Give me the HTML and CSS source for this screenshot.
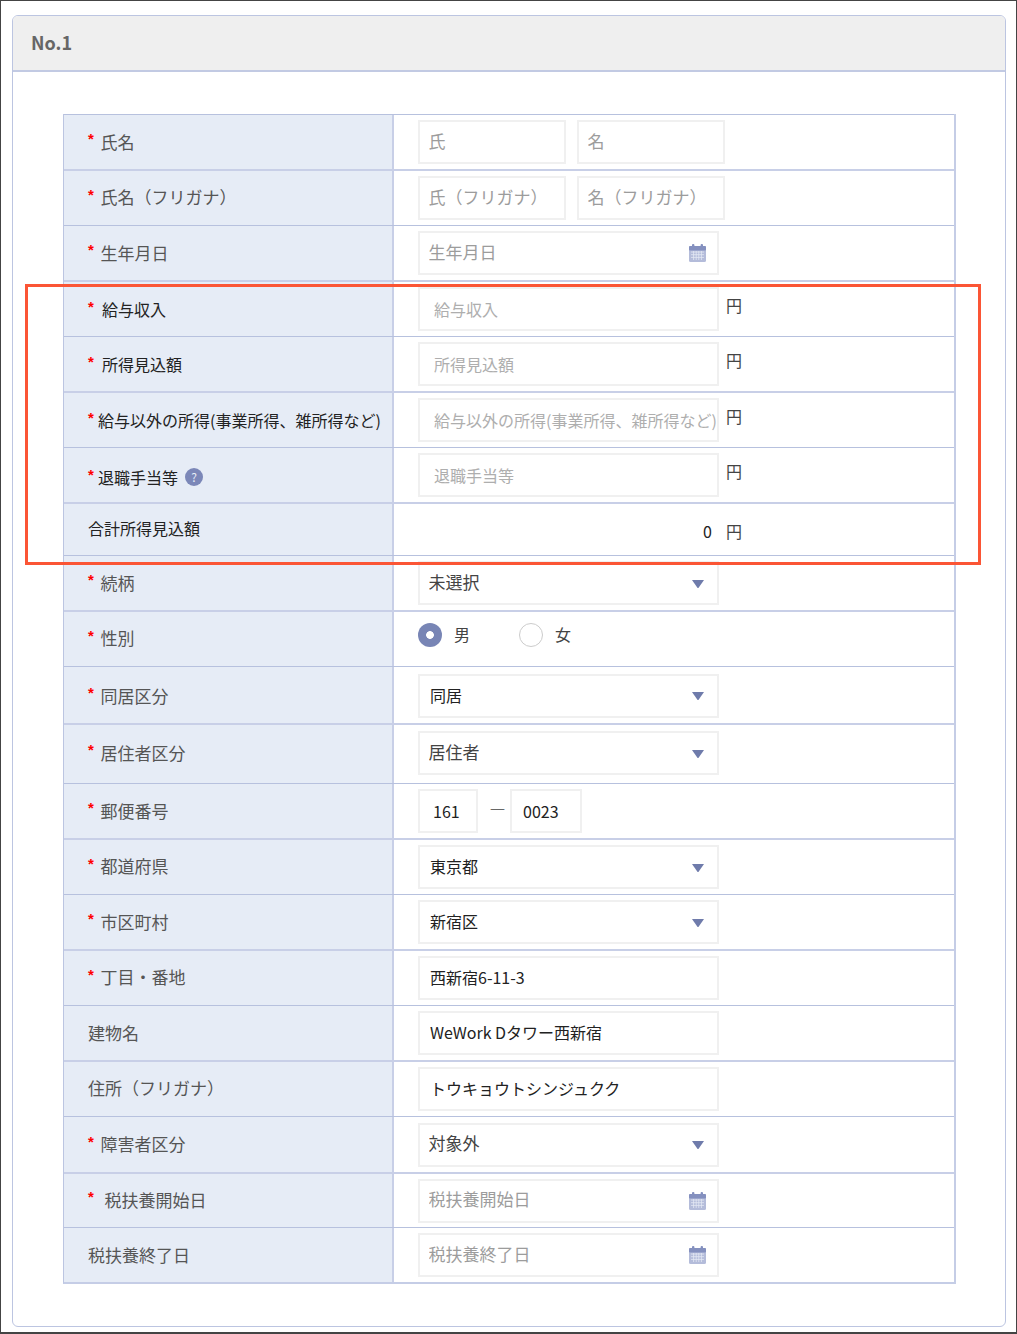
FILE: index.html
```html
<!DOCTYPE html>
<html lang="ja">
<head>
<meta charset="utf-8">
<title>No.1</title>
<link rel="stylesheet" href="styles.css">
</head>
<body>
<div class="frame">
  <section class="panel">
    <h2 class="panel-head">No.1</h2>
    <div class="panel-body">
      <div class="table">
        <div class="row thin h55">
          <div class="label"><span class="req">*</span>氏名</div>
          <div class="value"><input class="input w148" placeholder="氏"><input class="input w148 gap" placeholder="名"></div>
        </div>
        <div class="row thick h56">
          <div class="label"><span class="req">*</span>氏名（フリガナ）</div>
          <div class="value"><input class="input w148" placeholder="氏（フリガナ）"><input class="input w148 gap" placeholder="名（フリガナ）"></div>
        </div>
        <div class="row thin h55">
          <div class="label"><span class="req">*</span>生年月日</div>
          <div class="value">
            <div class="field w301"><input class="bare" placeholder="生年月日"><svg class="cal" viewBox="0 0 17 18"><use href="#calendar"/></svg></div>
          </div>
        </div>
        <div class="row thick h56">
          <div class="label dark"><span class="req req-wide">*</span>給与収入</div>
          <div class="value"><input class="input w301 inset" placeholder="給与収入"><span class="unit">円</span></div>
        </div>
        <div class="row thin h55">
          <div class="label dark"><span class="req req-wide">*</span>所得見込額</div>
          <div class="value"><input class="input w301 inset" placeholder="所得見込額"><span class="unit">円</span></div>
        </div>
        <div class="row thick h56">
          <div class="label dark"><span class="req req-tight">*</span>給与以外の所得(事業所得、雑所得など)</div>
          <div class="value"><input class="input w301 inset" placeholder="給与以外の所得(事業所得、雑所得など)"><span class="unit">円</span></div>
        </div>
        <div class="row thin h55">
          <div class="label dark low"><span class="req req-tight">*</span>退職手当等<span class="help">?</span></div>
          <div class="value"><input class="input w301 inset" placeholder="退職手当等"><span class="unit">円</span></div>
        </div>
        <div class="row thick h53">
          <div class="label dark high">合計所得見込額</div>
          <div class="value total"><span class="sum">0</span><span class="unit unit-sum">円</span></div>
        </div>
        <div class="row thin h55">
          <div class="label"><span class="req">*</span>続柄</div>
          <div class="value">
            <div class="field w301"><select class="bare mid"><option>未選択</option></select><svg class="arrow" viewBox="0 0 12 8"><use href="#caret"/></svg></div>
          </div>
        </div>
        <div class="row thick h56">
          <div class="label"><span class="req">*</span>性別</div>
          <div class="value radios">
            <label class="radio-item"><input type="radio" name="sex" class="radio" checked>男</label>
            <label class="radio-item second"><input type="radio" name="sex" class="radio">女</label>
          </div>
        </div>
        <div class="row thin h57 down">
          <div class="label"><span class="req">*</span>同居区分</div>
          <div class="value">
            <div class="field w301"><select class="bare ink"><option>同居</option></select><svg class="arrow" viewBox="0 0 12 8"><use href="#caret"/></svg></div>
          </div>
        </div>
        <div class="row thick h60 up">
          <div class="label"><span class="req">*</span>居住者区分</div>
          <div class="value">
            <div class="field w301"><select class="bare mid"><option>居住者</option></select><svg class="arrow" viewBox="0 0 12 8"><use href="#caret"/></svg></div>
          </div>
        </div>
        <div class="row thin h55">
          <div class="label"><span class="req">*</span>郵便番号</div>
          <div class="value">
            <input class="input w60 zip" value="161"><span class="dash">―</span><input class="input w72 zip2" value="0023">
          </div>
        </div>
        <div class="row thick h56">
          <div class="label"><span class="req">*</span>都道府県</div>
          <div class="value">
            <div class="field w301"><select class="bare ink"><option>東京都</option></select><svg class="arrow" viewBox="0 0 12 8"><use href="#caret"/></svg></div>
          </div>
        </div>
        <div class="row thin h55">
          <div class="label"><span class="req">*</span>市区町村</div>
          <div class="value">
            <div class="field w301"><select class="bare ink"><option>新宿区</option></select><svg class="arrow" viewBox="0 0 12 8"><use href="#caret"/></svg></div>
          </div>
        </div>
        <div class="row thick h56">
          <div class="label"><span class="req">*</span>丁目・番地</div>
          <div class="value"><input class="input w301 filled" value="西新宿6-11-3"></div>
        </div>
        <div class="row thin h55">
          <div class="label">建物名</div>
          <div class="value"><input class="input w301 filled" value="WeWork Dタワー西新宿"></div>
        </div>
        <div class="row thick h56">
          <div class="label">住所（フリガナ）</div>
          <div class="value"><input class="input w301 filled" value="トウキョウトシンジュクク"></div>
        </div>
        <div class="row thin h56">
          <div class="label"><span class="req">*</span>障害者区分</div>
          <div class="value">
            <div class="field w301"><select class="bare mid"><option>対象外</option></select><svg class="arrow" viewBox="0 0 12 8"><use href="#caret"/></svg></div>
          </div>
        </div>
        <div class="row thick h55">
          <div class="label"><span class="req req-far">*</span>税扶養開始日</div>
          <div class="value">
            <div class="field w301"><input class="bare" placeholder="税扶養開始日"><svg class="cal" viewBox="0 0 17 18"><use href="#calendar"/></svg></div>
          </div>
        </div>
        <div class="row thin h55">
          <div class="label">税扶養終了日</div>
          <div class="value">
            <div class="field w301"><input class="bare" placeholder="税扶養終了日"><svg class="cal" viewBox="0 0 17 18"><use href="#calendar"/></svg></div>
          </div>
        </div>
      </div>
    </div>
  </section>
  <div class="highlight"></div>
</div>
<svg class="defs" width="0" height="0" aria-hidden="true">
  <symbol id="calendar" viewBox="0 0 17 18">
    <rect x="0" y="2" width="17" height="16" rx="1.5" fill="#b4bcda"/>
    <rect x="0" y="2" width="17" height="4.5" rx="1" fill="#8490bf"/>
    <rect x="3" y="0" width="2.4" height="4" rx="1" fill="#8490bf"/>
    <rect x="11.6" y="0" width="2.4" height="4" rx="1" fill="#8490bf"/>
    <path d="M2 8h13M2 10.700h13M2 13.400h13M4.600 7v9M7.200 7v9M9.800 7v9M12.400 7v9" stroke="#e4e8f4" stroke-width=".8" fill="none"/>
  </symbol>
  <symbol id="caret" viewBox="0 0 12 8">
    <path d="M0 0H12L6.600 7.800Q6 8.300 5.400 7.800Z" fill="#6f7bab"/>
  </symbol>
</svg>
</body>
</html>
```

FILE: styles.css
```css
* { box-sizing: border-box; }

html, body {
  margin: 0;
  padding: 0;
}

body {
  background: #fff;
  color: #555;
  font-family: "Noto Sans CJK JP", "Noto Sans", sans-serif;
  font-size: 16px;
}

.frame {
  position: relative;
  width: 1017px;
  height: 1334px;
  border: 1px solid #444;
  border-bottom-width: 2px;
  padding: 14px 10px 0 11px;
  overflow: hidden;
}

.panel {
  height: 1312px;
  border: 1px solid #bcc5e1;
  border-radius: 6px;
  overflow: hidden;
}

.panel-head {
  margin: 0;
  height: 56px;
  padding: 0 0 2px 18px;
  display: flex;
  align-items: center;
  background: #efefef;
  border-bottom: 2px solid #c2cae3;
  color: #666;
  font-size: 18px;
  font-weight: 700;
}

.panel-body {
  padding: 42px 50px 0;
}

.table {
  width: 893px;
  border-left: 1px solid #bcc5e1;
  border-right: 2px solid #c5cde6;
  border-bottom: 2px solid #c5cde6;
}

.row {
  display: flex;
  align-items: stretch;
}

.thin { border-top: 1px solid #b7c1de; }
.thick { border-top: 2px solid #c8cfe7; }

.h53 { height: 53px; }
.h55 { height: 55px; }
.h56 { height: 56px; }
.h57 { height: 57px; }
.h60 { height: 60px; }

.down .label { padding-bottom: 0; }
.down .value { padding-top: 1px; }
.up .value { padding-bottom: 2px; }

.label {
  flex: 0 0 330px;
  display: flex;
  align-items: center;
  padding: 0 0 2px 24px;
  background: #e6ecf6;
  border-right: 2px solid #c8cfe7;
  color: #555;
  font-size: 17px;
  white-space: nowrap;
}

.thick .label { padding-bottom: 3px; }
.up .label { padding-bottom: 4px; }

.label.dark {
  padding-bottom: 0;
  color: #222;
  font-size: 16px;
}

.label.low { padding-top: 3px; }
.label.high { padding-bottom: 4px; }

.req {
  width: 12.500px;
  height: 16px;
  margin-bottom: 4px;
  flex: none;
  color: #f00;
  font-family: "Liberation Sans", sans-serif;
  font-size: 15px;
  font-weight: 700;
  line-height: 16px;
}

.req-wide { width: 14px; }
.req-tight { width: 10px; }
.req-far { width: 16.500px; }

.help {
  width: 18px;
  height: 18px;
  margin-left: 7px;
  flex: none;
  border-radius: 50%;
  background: #7b87b8;
  color: #e6ecf6;
  font-size: 12px;
  line-height: 18px;
  text-align: center;
}

.value {
  flex: 1;
  display: flex;
  align-items: center;
  padding-left: 24px;
}

.input, .field {
  height: 44px;
  border: 2px solid #f0f0f0;
  background: #fff;
}

.input {
  padding: 0 8.500px 4px;
  color: #222;
  font-family: inherit;
  font-size: 17px;
  outline: none;
}

.input::placeholder, .bare::placeholder {
  color: #9c9c9c;
  opacity: 1;
}

.inset {
  padding: 0 0 0 14px;
  font-size: 16px;
}

.inset::placeholder { color: #aeaeae; }

.filled {
  padding: 0 0 3px 10px;
  font-size: 16px;
}

.field {
  display: flex;
  align-items: center;
}

.bare {
  flex: 1;
  min-width: 0;
  height: 100%;
  padding: 0 0 4px 8.500px;
  border: 0;
  background: transparent;
  font-family: inherit;
  font-size: 17px;
  outline: none;
  appearance: none;
}

.mid { color: #444; }

.ink {
  padding: 0 0 2px 10px;
  color: #222;
  font-size: 16px;
}

.w60 { width: 60px; }
.w72 { width: 72px; }
.w148 { width: 148px; }
.w301 { width: 301px; }
.gap { margin-left: 11px; }

.zip, .zip2 {
  padding-bottom: 0;
  font-size: 16px;
}
.zip { padding-left: 13px; }
.zip2 { padding-left: 11px; }

.dash {
  width: 32px;
  padding: 0 0 6px 7px;
  text-align: center;
  color: #444;
}

.cal {
  flex: none;
  width: 17px;
  height: 18px;
  margin-right: 11px;
}

.arrow {
  flex: none;
  width: 12px;
  height: 8px;
  margin: 1px 13px 0 0;
}

.unit {
  margin-left: 7px;
  padding-bottom: 8px;
  color: #444;
}

.total { padding-top: 2px; }

.sum {
  width: 294px;
  text-align: right;
  color: #222;
}

.unit-sum {
  margin-left: 14px;
  padding-bottom: 0;
}

.radios {
  align-items: flex-start;
  padding-top: 11px;
}

.radio-item {
  display: flex;
  align-items: flex-start;
  height: 24px;
  color: #444;
  line-height: 22px;
}

.second { margin-left: 49px; }

.radio {
  appearance: none;
  width: 24px;
  height: 24px;
  margin: 0 12px 0 0;
  border: 1px solid #ccc;
  border-radius: 50%;
  background: #fff;
}

.radio:checked {
  border: 0;
  background: radial-gradient(circle, #fff 0 3.500px, #7885b5 4.200px);
}

.highlight {
  position: absolute;
  left: 24px;
  top: 283px;
  width: 956px;
  height: 281px;
  border: 3px solid #fb5535;
  pointer-events: none;
}

.defs { position: absolute; }
```
